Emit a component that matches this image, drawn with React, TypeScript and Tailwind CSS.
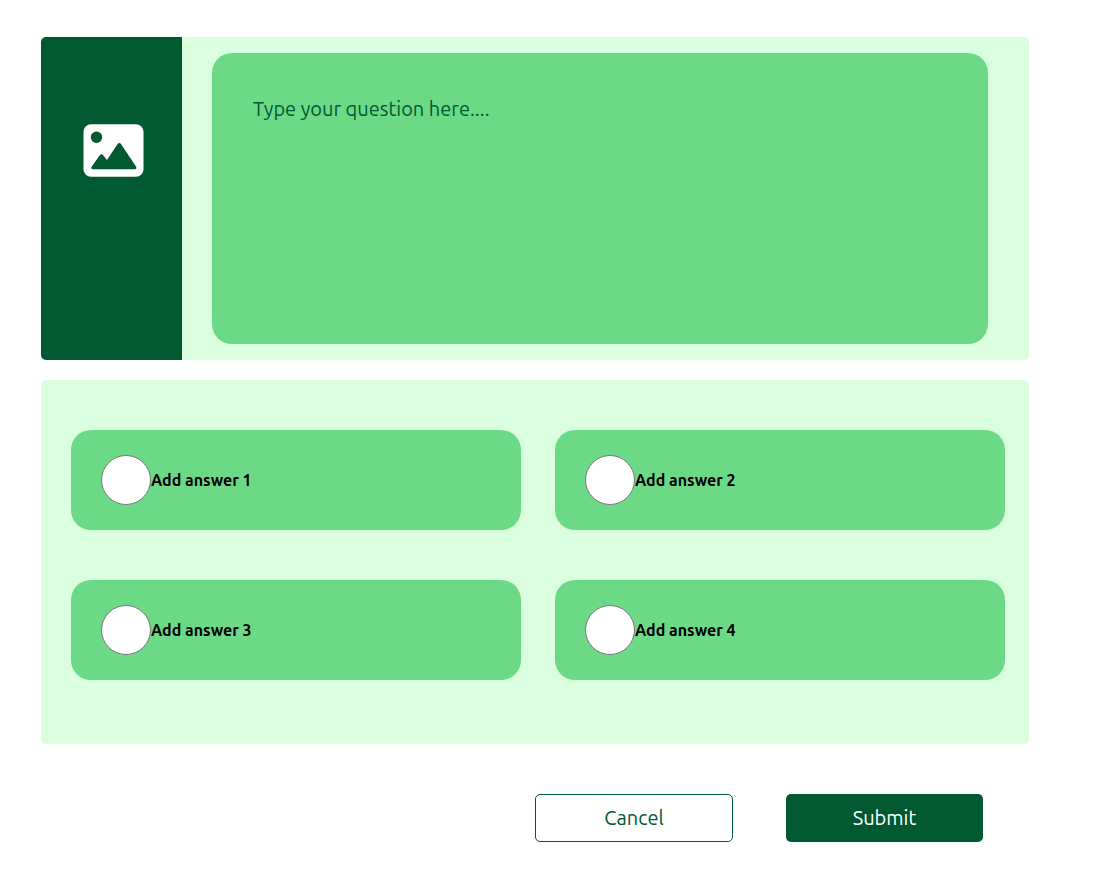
import { useState } from "react";

const answers = ["Add answer 1", "Add answer 2", "Add answer 3", "Add answer 4"];

function PictureIcon() {
  return (
    <svg viewBox="0 0 61 53" className="h-[53px] w-[61px]" aria-hidden="true">
      <rect x="0.5" y="0.2" width="60" height="52.6" rx="7.5" fill="#fff" />
      <circle cx="13.5" cy="13.3" r="5.7" fill="#005931" />
      <path
        d="M9.9 45.2 H51.7 C53.3 45.2 53.9 43.8 53 42.4 L38 20.1 C37.1 18.7 35.5 18.7 34.6 20.1 L24 36 L20.2 31.2 C19.2 29.9 17.8 29.9 16.8 31.2 L8.8 42.4 C7.8 43.8 8.3 45.2 9.9 45.2 Z"
        fill="#005931"
      />
    </svg>
  );
}

export default function App() {
  const [selected, setSelected] = useState<number | null>(null);

  return (
    <form
      className="pt-[37px] pr-[78px] pb-8 pl-[41px] font-['Ubuntu','Noto_Sans',sans-serif]"
      onSubmit={(event) => event.preventDefault()}
    >
      <section className="flex overflow-hidden rounded-[5px] bg-[#d9ffdf]">
        <button
          type="button"
          aria-label="Add a picture"
          className="flex w-[141px] shrink-0 items-start justify-center bg-[#005931] pt-[87px] pl-1"
        >
          <PictureIcon />
        </button>
        <div className="flex grow py-4 pr-[41px] pl-[30px]">
          <textarea
            aria-label="Question"
            placeholder="Type your question here...."
            className="h-[291px] grow resize-none rounded-[20px] bg-[#6cd987] px-[41px] py-10 text-[20px] leading-8 text-[#005931] outline-none placeholder:text-[#005931]"
          />
        </div>
      </section>

      <fieldset className="mt-5 grid grid-cols-2 gap-x-[34px] gap-y-[50px] rounded-[5px] bg-[#d9ffdf] pt-[50px] pr-6 pb-16 pl-[30px]">
        {answers.map((answer, index) => (
          <label
            key={answer}
            className="flex h-[100px] items-center rounded-[20px] bg-[#6cd987] px-[30px] text-[16px] font-bold text-black"
          >
            <input
              type="radio"
              name="answer"
              checked={selected === index}
              onChange={() => setSelected(index)}
              className="size-[50px] shrink-0 appearance-none rounded-full border border-[#767676] bg-white checked:border-[14px] checked:border-[#005931]"
            />
            {answer}
          </label>
        ))}
      </fieldset>

      <div className="mt-[50px] flex justify-end gap-[53px] pr-[46px] text-[20px]">
        <button type="button" className="h-12 w-[198px] rounded-[5px] border border-[#005931] bg-white text-[#005931]">
          Cancel
        </button>
        <button type="submit" className="h-12 w-[197px] rounded-[5px] bg-[#005931] text-white">
          Submit
        </button>
      </div>
    </form>
  );
}
